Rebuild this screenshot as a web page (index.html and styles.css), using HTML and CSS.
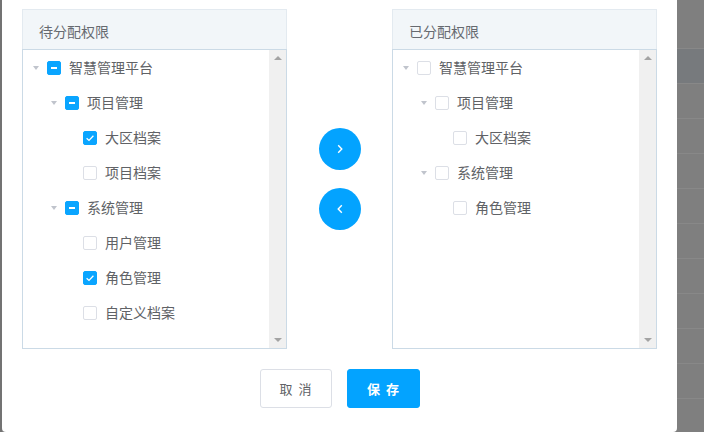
FILE: index.html
```html
<!DOCTYPE html>
<html lang="zh">
<head>
<meta charset="utf-8">
<title>权限分配</title>
<link rel="stylesheet" href="styles.css">
</head>
<body>
<div class="edge-left"></div>
<div class="modal">
  <div class="transfer">
    <div class="panel">
      <div class="panel-head">待分配权限</div>
      <div class="panel-body">
        <div class="tree">
          <div class="node l0"><span class="arrow"></span><span class="cb half"></span><span class="label">智慧管理平台</span></div>
          <div class="node l1"><span class="arrow"></span><span class="cb half"></span><span class="label">项目管理</span></div>
          <div class="node l2"><span class="arrow none"></span><span class="cb on"><svg viewBox="0 0 14 14"><path d="M3.6 7.2 L6 9.4 L10.4 4.8" /></svg></span><span class="label">大区档案</span></div>
          <div class="node l2"><span class="arrow none"></span><span class="cb"></span><span class="label">项目档案</span></div>
          <div class="node l1"><span class="arrow"></span><span class="cb half"></span><span class="label">系统管理</span></div>
          <div class="node l2"><span class="arrow none"></span><span class="cb"></span><span class="label">用户管理</span></div>
          <div class="node l2"><span class="arrow none"></span><span class="cb on"><svg viewBox="0 0 14 14"><path d="M3.6 7.2 L6 9.4 L10.4 4.8" /></svg></span><span class="label">角色管理</span></div>
          <div class="node l2"><span class="arrow none"></span><span class="cb"></span><span class="label">自定义档案</span></div>
        </div>
        <div class="scrollbar"><span class="sb-up"></span><span class="sb-down"></span></div>
      </div>
    </div>
    <div class="actions">
      <button class="round"><svg viewBox="0 0 12 12"><path d="M4.2 2.2 L7.8 6 L4.2 9.8" /></svg></button>
      <button class="round"><svg viewBox="0 0 12 12"><path d="M7.8 2.2 L4.2 6 L7.8 9.8" /></svg></button>
    </div>
    <div class="panel">
      <div class="panel-head">已分配权限</div>
      <div class="panel-body">
        <div class="tree">
          <div class="node l0"><span class="arrow"></span><span class="cb"></span><span class="label">智慧管理平台</span></div>
          <div class="node l1"><span class="arrow"></span><span class="cb"></span><span class="label">项目管理</span></div>
          <div class="node l2"><span class="arrow none"></span><span class="cb"></span><span class="label">大区档案</span></div>
          <div class="node l1"><span class="arrow"></span><span class="cb"></span><span class="label">系统管理</span></div>
          <div class="node l2"><span class="arrow none"></span><span class="cb"></span><span class="label">角色管理</span></div>
        </div>
        <div class="scrollbar"><span class="sb-up"></span><span class="sb-down"></span></div>
      </div>
    </div>
  </div>
  <div class="footer">
    <button class="btn cancel">取消</button>
    <button class="btn save">保存</button>
  </div>
</div>
<div class="backdrop">
  <div class="bd-row first"></div>
  <div class="bd-row dark"></div>
  <div class="bd-row"></div>
  <div class="bd-row"></div>
  <div class="bd-row"></div>
  <div class="bd-row"></div>
  <div class="bd-row"></div>
  <div class="bd-row"></div>
  <div class="bd-row"></div>
  <div class="bd-row"></div>
  <div class="bd-row"></div>
  <div class="bd-row"></div>
</div>
</body>
</html>
```
FILE: styles.css
```css
* { box-sizing: border-box; }
html, body {
  margin: 0;
  padding: 0;
  height: 432px;
  overflow: hidden;
}
body {
  display: flex;
  background: #7f7f7f;
  font-family: "Noto Sans CJK SC", "Noto Sans", sans-serif;
  color: #606266;
}
.edge-left {
  width: 2px;
  background: #737373;
  flex: none;
}
.modal {
  width: 675px;
  flex: none;
  height: 432px;
  background: #fff;
  border-radius: 0 0 4px 4px;
  padding: 9px 20px 0 20px;
}
.transfer {
  display: flex;
}
.panel {
  width: 265px;
  flex: none;
}
.panel-head {
  height: 40px;
  background: #f2f6f9;
  border: 1px solid #e3eaf0;
  border-bottom: none;
  padding: 3px 0 0 16px;
  display: flex;
  align-items: center;
  font-size: 14px;
  color: #666a70;
}
.panel-body {
  height: 300px;
  border: 1px solid #cbdae6;
  display: flex;
}
.tree {
  flex: 1;
}
.node {
  height: 35px;
  display: flex;
  align-items: center;
  padding-left: 4px;
  font-size: 14px;
}
.node.l1 { padding-left: 22px; }
.node.l2 { padding-left: 40px; }
.arrow {
  width: 18px;
  height: 18px;
  flex: none;
  display: flex;
  align-items: center;
  justify-content: center;
}
.arrow::before {
  content: "";
  border-left: 3.5px solid transparent;
  border-right: 3.5px solid transparent;
  border-top: 4px solid #c0c4cc;
}
.arrow.none::before { display: none; }
.cb {
  width: 14px;
  height: 14px;
  flex: none;
  margin: 0 8px 0 2px;
  border: 1px solid #dcdfe6;
  border-radius: 2px;
  background: #fff;
  display: flex;
  align-items: center;
  justify-content: center;
}
.cb.half, .cb.on {
  background: #0aa5ff;
  border-color: #0aa5ff;
}
.cb.half::before {
  content: "";
  width: 6px;
  height: 2px;
  background: #fff;
}
.cb svg {
  width: 14px;
  height: 14px;
  flex: none;
}
.cb svg path {
  fill: none;
  stroke: #fff;
  stroke-width: 1.3;
}
.label {
  line-height: 20px;
  padding-bottom: 2px;
  white-space: nowrap;
}
.scrollbar {
  width: 17px;
  flex: none;
  background: #f0f0f0;
  display: flex;
  flex-direction: column;
  justify-content: space-between;
  align-items: center;
  padding: 6px 0 6px;
}
.sb-up {
  border-left: 4px solid transparent;
  border-right: 4px solid transparent;
  border-bottom: 4px solid #a3a3a3;
}
.sb-down {
  border-left: 4px solid transparent;
  border-right: 4px solid transparent;
  border-top: 4px solid #a3a3a3;
}
.actions {
  flex: 1;
  display: flex;
  flex-direction: column;
  align-items: center;
  justify-content: center;
  gap: 18px;
}
.round {
  width: 42px;
  height: 42px;
  border-radius: 50%;
  border: none;
  background: #03a3ff;
  padding: 0;
  display: flex;
  align-items: center;
  justify-content: center;
}
.round svg {
  width: 12px;
  height: 12px;
}
.round svg path {
  fill: none;
  stroke: #fff;
  stroke-width: 1.4;
}
.footer {
  display: flex;
  justify-content: center;
  gap: 15px;
  margin-top: 20px;
}
.btn {
  height: 39px;
  border-radius: 3px;
  font-family: "Noto Sans CJK SC", "Noto Sans", sans-serif;
  font-size: 13px;
  letter-spacing: 6px;
  padding: 0 0 0 6px;
}
.cancel {
  width: 72px;
  background: #fff;
  border: 1px solid #dcdfe6;
  color: #606266;
}
.save {
  width: 73px;
  background: #03a3ff;
  border: 1px solid #03a3ff;
  color: #fff;
  font-weight: bold;
}
.backdrop {
  flex: 1;
  display: flex;
  flex-direction: column;
}
.bd-row {
  height: 35px;
  flex: none;
  border-top: 1px solid #888;
}
.bd-row.first {
  height: 48px;
  border-top: none;
}
.bd-row.dark {
  background: #777a7d;
}
```
